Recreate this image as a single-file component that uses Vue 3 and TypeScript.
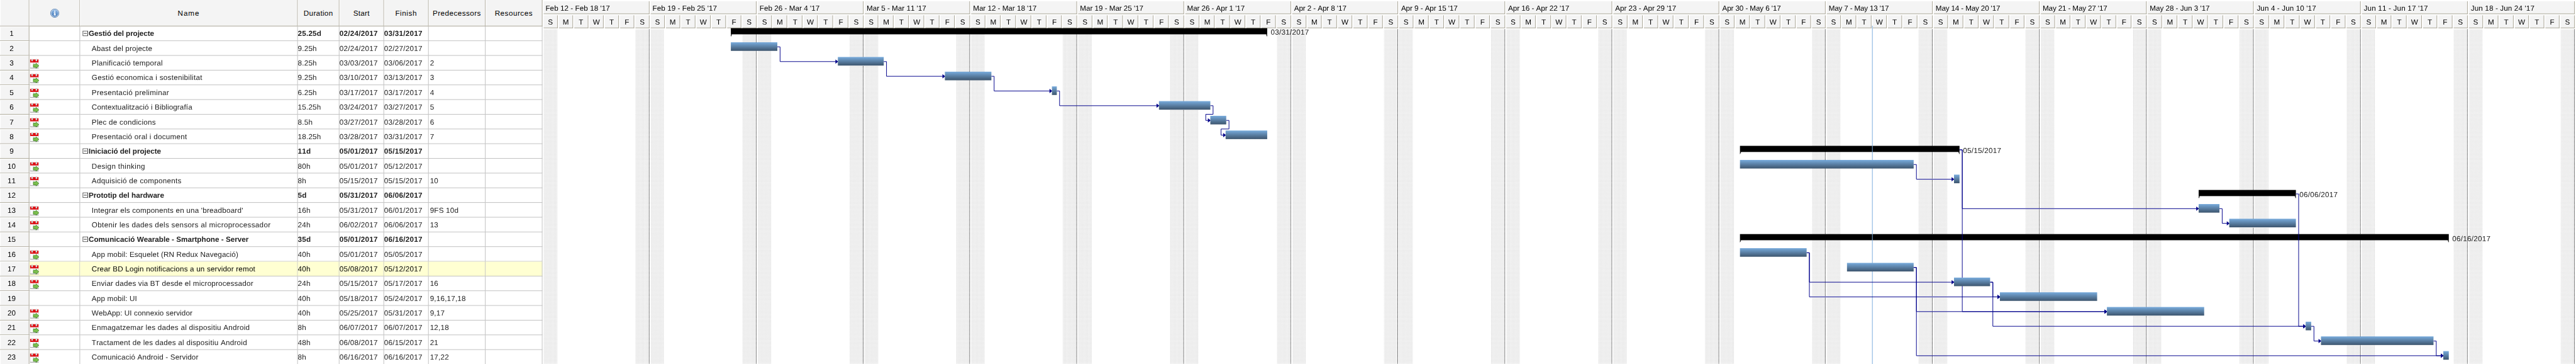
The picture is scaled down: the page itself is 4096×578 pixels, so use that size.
<script setup lang="ts">
interface Task {
  id: number
  name: string
  nameWidth: number
  duration: string
  start: string
  finish: string
  pred: string
  x1: number
  x2: number
  group?: boolean
  noIcon?: boolean
}

const t = (
  id: number, name: string, nameWidth: number, duration: string, start: string, finish: string,
  pred: string, x1: number, x2: number, extra: Partial<Task> = {},
): Task => ({
  id, name, nameWidth, duration, start: start + '/2017', finish: finish + '/2017', pred, x1, x2, ...extra,
})

// Tracking that makes a 12px label span the given number of pixels.
const pen = document.createElement('canvas').getContext('2d')!
const fit = (label: string, width: number, bold = false) => {
  pen.font = `${bold ? 'bold ' : ''}1200px "Liberation Sans", Arial, sans-serif`
  const natural = pen.measureText(label).width / 100
  return { letterSpacing: ((width + 1.3 - natural) / (label.length - 1)).toFixed(3) + 'px' }
}
const DATE_WIDTH = 61.2

const G = { group: true, noIcon: true }
const tasks: Task[] = [
  t(1, 'Gestió del projecte', 105.7, '25.25d', '02/24', '03/31', '', 1195, 2072, G),
  t(2, 'Abast del projecte', 97.5, '9.25h', '02/24', '02/27', '', 1195, 1271, { noIcon: true }),
  t(3, 'Planificació temporal', 114.7, '8.25h', '03/03', '03/06', '2', 1370, 1445),
  t(4, 'Gestió economica i sostenibilitat', 179.3, '9.25h', '03/10', '03/13', '3', 1545, 1621),
  t(5, 'Presentació preliminar', 125, '6.25h', '03/17', '03/17', '4', 1720, 1728),
  t(6, 'Contextualització i Bibliografía', 163, '15.25h', '03/24', '03/27', '5', 1895, 1979),
  t(7, 'Plec de condicions', 103.3, '8.5h', '03/27', '03/28', '6', 1979, 2005),
  t(8, 'Presentació oral i document', 154.3, '18.25h', '03/28', '03/31', '7', 2004, 2072),
  t(9, 'Iniciació del projecte', 117, '11d', '05/01', '05/15', '', 2845, 3204, G),
  t(10, 'Design thinking', 85.7, '80h', '05/01', '05/12', '', 2845, 3129),
  t(11, 'Adquisició de components', 145.3, '8h', '05/15', '05/15', '10', 3195, 3204),
  t(12, 'Prototip del hardware', 122, '5d', '05/31', '06/06', '', 3595, 3754, G),
  t(13, "Integrar els components en una 'breadboard'", 246, '16h', '05/31', '06/01', '9FS 10d', 3595, 3629),
  t(14, 'Obtenir les dades dels sensors al microprocessador', 291, '24h', '06/02', '06/06', '13', 3645, 3754),
  t(15, 'Comunicació Wearable - Smartphone - Server', 260, '35d', '05/01', '06/16', '', 2845, 4004, G),
  t(16, 'App mobil: Esquelet (RN Redux Navegació)', 238.3, '40h', '05/01', '05/05', '', 2845, 2954),
  t(17, 'Crear BD Login notificacions a un servidor remot', 266, '40h', '05/08', '05/12', '', 3020, 3129),
  t(18, 'Enviar dades via BT desde el microprocessador', 262.7, '24h', '05/15', '05/17', '16', 3195, 3254),
  t(19, 'App mobil: UI', 72.7, '40h', '05/18', '05/24', '9,16,17,18', 3270, 3429, { noIcon: true }),
  t(20, 'WebApp: UI connexio servidor', 163, '40h', '05/25', '05/31', '9,17', 3445, 3604),
  t(21, 'Enmagatzemar les dades al dispositiu Android', 257, '8h', '06/07', '06/07', '12,18', 3770, 3779),
  t(22, 'Tractament de les dades al dispositiu Android', 252, '48h', '06/08', '06/15', '21', 3795, 3979),
  t(23, 'Comunicació Android - Servidor', 173, '8h', '06/16', '06/16', '17,22', 3995, 4004),
]
const groups = tasks.filter((k) => k.group)
const leaves = tasks.filter((k) => !k.group)

const columns: [string, number][] = [
  ['Name', 33.7], ['Duration', 46.3], ['Start', 25], ['Finish', 33.7], ['Predecessors', 77.3], ['Resources', 60.3],
]

const CHART_X = 887
const edge = (day: number) => Math.floor(886.34 + 24.984 * day)
const weekLabels: [string, number][] = [
  ['Feb 12 - Feb 18', 104], ['Feb 19 - Feb 25', 104], ['Feb 26 - Mar 4', 96.8], ['Mar 5 - Mar 11', 95.3],
  ['Mar 12 - Mar 18', 102.6], ['Mar 19 - Mar 25', 102.3], ['Mar 26 - Apr 1', 93], ['Apr 2 - Apr 8', 84.2],
  ['Apr 9 - Apr 15', 91.2], ['Apr 16 - Apr 22', 98.5], ['Apr 23 - Apr 29', 98.5], ['Apr 30 - May 6', 94.7],
  ['May 7 - May 13', 97.3], ['May 14 - May 20', 104.3], ['May 21 - May 27', 104.3], ['May 28 - Jun 3', 96.8],
  ['Jun 4 - Jun 10', 95.7], ['Jun 11 - Jun 17', 102.7], ['Jun 18 - Jun 24', 102.7],
]
const weeks = weekLabels.map(([range, labelWidth], i) => ({
  label: range + " '17",
  labelWidth,
  width: edge(7 * i + 7) - edge(7 * i),
  line: edge(7 * i + 7),
}))
const days = Array.from({ length: weekLabels.length * 7 }, (_, i) => ({
  letter: 'SMTWTFS'[i % 7],
  width: edge(i + 1) - edge(i),
  x: edge(i),
  off: i % 7 === 0 || i % 7 === 6,
}))
const offDays = days.filter((d) => d.off)

const linkPairs: [number, number][] = [
  [2, 3], [3, 4], [4, 5], [5, 6], [6, 7], [7, 8], [10, 11], [9, 13], [13, 14], [16, 18], [16, 19],
  [18, 19], [9, 20], [17, 20], [12, 21], [18, 21], [21, 22], [17, 23], [22, 23],
]
const midY = (id: number) => 28.5 + 24 * id
const links = linkPairs.map(([a, b]) => {
  const from = tasks[a - 1]
  const to = tasks[b - 1]
  const y1 = midY(a)
  const y2 = midY(b)
  const vx = from.x2 + 4.5
  const d = vx < to.x1 - 2
    ? `M${from.x2} ${y1}H${vx}V${y2}H${to.x1}`
    : `M${from.x2} ${y1}H${vx}V${y2 - 10}H${to.x1 - 7.5}V${y2}H${to.x1}`
  return { d, arrow: `M${to.x1 - 4} ${y2 - 3.5}V${y2 + 3.5}L${to.x1} ${y2 + 0.5}V${y2 - 0.5}Z` }
})
</script>

<template>
  <div class="window">
    <div class="board">
      <section class="sheet">
        <div class="row head">
          <div class="c num"></div>
          <div class="c">
            <svg class="info" width="15" height="15" viewBox="0 0 15 15">
              <defs>
                <linearGradient id="infoFill" x1="0" y1="0" x2="0" y2="1">
                  <stop offset="0" stop-color="#8fb9e6" />
                  <stop offset="1" stop-color="#4579b8" />
                </linearGradient>
              </defs>
              <circle cx="7.5" cy="7.5" r="6.9" fill="#dbe6f3" stroke="#4c78ad" stroke-width=".9" />
              <circle cx="7.5" cy="7.5" r="5.7" fill="url(#infoFill)" />
              <path d="M6.6 3.4h2v1.6h-2zM6 6h2.6v4h.8v1.1H5.8V10h.9V7H6z" fill="#fff" />
            </svg>
          </div>
          <div v-for="[label, width] in columns" :key="label" class="c">
            <span :style="fit(label, width)">{{ label }}</span>
          </div>
        </div>
        <div
          v-for="k in tasks"
          :key="k.id"
          class="row"
          :class="{ group: k.group, selected: k.id === 17 }"
        >
          <div class="c num">{{ k.id }}</div>
          <div class="c">
            <svg v-if="!k.noIcon" class="cal" width="15" height="16" viewBox="0 0 15 16">
              <rect x=".3" y="3" width="13.4" height="12.5" fill="#fff" />
              <path d="M.4 6v9.5M13.6 6v9.5" stroke="#b9b9b9" stroke-width=".7" />
              <path d="M0 15.1h14" stroke="#8c8c8c" stroke-width="1" />
              <rect y="1" width="14" height="5" fill="#dd0d12" />
              <path d="M2.2 0h2.6v4H2.2zM9.2 0h2.6v4H9.2z" fill="#bcbcbc" />
              <path d="M3 .6h1v2.8H3zM10 .6h1v2.8h-1z" fill="#f2f2f2" />
              <path d="M4.5 7.5h3" stroke="#c8c8c8" />
              <path d="M5.5 9h4.3V7l4.8 4.4-4.8 4.2v-2H5.5z" fill="#7cc04e" stroke="#3d7f22" stroke-width=".8" />
            </svg>
          </div>
          <div class="c name">
            <svg v-if="k.group" class="toggle" width="9" height="9" viewBox="0 0 9 9">
              <rect x=".5" y=".5" width="8" height="8" fill="#fff" stroke="#333" />
              <path d="M2 4.5h5" stroke="#333" />
            </svg>
            <span :style="fit(k.name, k.nameWidth, k.group)">{{ k.name }}</span>
          </div>
          <div class="c">{{ k.duration }}</div>
          <div class="c"><span :style="fit(k.start, DATE_WIDTH, k.group)">{{ k.start }}</span></div>
          <div class="c"><span :style="fit(k.finish, DATE_WIDTH, k.group)">{{ k.finish }}</span></div>
          <div class="c pred">{{ k.pred }}</div>
          <div class="c"></div>
        </div>
      </section>

      <section class="chart">
        <div class="scale weeks">
          <div v-for="w in weeks" :key="w.label" class="slot" :style="{ width: w.width + 'px' }">
            <div class="tab"><span :style="fit(w.label, w.labelWidth)">{{ w.label }}</span></div>
          </div>
        </div>
        <div class="scale days">
          <div v-for="(d, i) in days" :key="i" class="slot" :style="{ width: d.width + 'px' }">
            <div class="tab">{{ d.letter }}</div>
          </div>
        </div>
        <svg class="plot" width="3325" height="594" :viewBox="`${CHART_X} 0 3325 594`">
          <defs>
            <pattern id="dots" width="2" height="2" patternUnits="userSpaceOnUse">
              <rect width="1" height="1" fill="#bcbcbc" />
            </pattern>
            <linearGradient id="barFill" x1="0" y1="0" x2="0" y2="1">
              <stop offset="0" stop-color="#78abdc" />
              <stop offset="1" stop-color="#3d556e" />
            </linearGradient>
          </defs>
          <rect v-for="d in offDays" :key="d.x" :x="d.x + 3" y="48" width="22" height="546" fill="url(#dots)" />
          <path
            v-for="w in weeks"
            :key="w.line"
            :d="`M${w.line + 0.5} 48V594`"
            stroke="#000"
            stroke-dasharray="1 1"
          />
          <g v-for="g in groups" :key="g.id">
            <rect :x="g.x1" :y="22 + 24 * g.id" :width="g.x2 - g.x1" height="10" />
            <path :d="`M${g.x1} ${32 + 24 * g.id}h2l-2 4zM${g.x2} ${32 + 24 * g.id}h-2l2 4z`" />
            <text
              :x="g.x2 + 5.7"
              :y="(g.id === 1 ? 33 : 33.3) + 24 * g.id"
              class="stamp"
              :style="fit(g.finish, DATE_WIDTH)"
            >{{ g.finish }}</text>
          </g>
          <path d="M3061.5 42V594" stroke="#78abdc" />
          <g v-for="(l, i) in links" :key="i">
            <path :d="l.d" fill="none" stroke="#00008b" />
            <path :d="l.arrow" fill="#00008b" />
          </g>
          <rect
            v-for="k in leaves"
            :key="k.id"
            :x="k.x1"
            :y="21 + 24 * k.id"
            :width="k.x2 - k.x1"
            height="14"
            fill="url(#barFill)"
          />
        </svg>
      </section>
    </div>
  </div>
</template>

<style>
body {
  margin: 0;
  background: #fff;
}
</style>

<style scoped>
.window {
  width: 4096px;
  height: 578px;
  overflow: hidden;
  background: #fff;
}
.board {
  display: flex;
  width: 4212px;
  height: 594px;
  overflow: hidden;
  transform: scale(0.97246, 0.97306);
  transform-origin: 0 0;
  font: 12px/14px "Liberation Sans", Arial, sans-serif;
  letter-spacing: 0.2px;
  text-rendering: geometricPrecision;
  font-kerning: none;
  color: #222;
}
.sheet {
  flex: none;
  width: 887px;
}
.row {
  display: grid;
  grid-template-columns: 48px 83px 356px 68px 73px 73px 93px 93px;
  height: 24px;
}
.c {
  box-sizing: border-box;
  display: flex;
  align-items: center;
  padding-top: 1px;
  border-right: 1px solid #c0c0c0;
  border-bottom: 1px solid #c0c0c0;
  white-space: nowrap;
  overflow: hidden;
}
.num {
  justify-content: center;
  padding-right: 9px;
  background: #f4f4f4;
  border-color: #aca899;
  box-shadow: inset 1px 1px #fff;
  color: #000;
  letter-spacing: 0;
}
.head {
  height: 43px;
}
.head .c {
  justify-content: center;
  background: #f4f4f4;
  border-color: #aca899;
  box-shadow: inset 1px 0 #fff;
  color: #000;
}
.name {
  padding-left: 19px;
}
.group .name {
  padding-left: 4px;
}
.toggle {
  flex: none;
  margin: 0 1px 1px 0;
}
.group .c:not(.num) {
  font-weight: bold;
}
.pred {
  padding-left: 2px;
}
.cal {
  margin: 2px 0 0 1px;
}
.selected .c:not(.num) {
  background: #ffffd2;
  color: #000;
}
.chart {
  position: relative;
  flex: none;
  width: 3325px;
  padding-top: 2px;
  box-sizing: border-box;
  color: #000;
}
.scale {
  display: flex;
  height: 21px;
}
.days {
  margin-top: 2px;
  letter-spacing: 0;
}
.slot {
  flex: none;
  box-sizing: border-box;
  padding-left: 2px;
}
.tab {
  box-sizing: border-box;
  height: 21px;
  padding: 1px 0 0 3px;
  line-height: 20px;
  background: #f4f4f4;
  border-right: 1px solid #aca899;
  border-bottom: 1px solid #aca899;
  white-space: nowrap;
}
.days .tab {
  padding-left: 0;
  text-align: center;
}
.plot {
  position: absolute;
  inset: 0 auto auto 0;
}
.stamp {
  fill: #222;
}
</style>
